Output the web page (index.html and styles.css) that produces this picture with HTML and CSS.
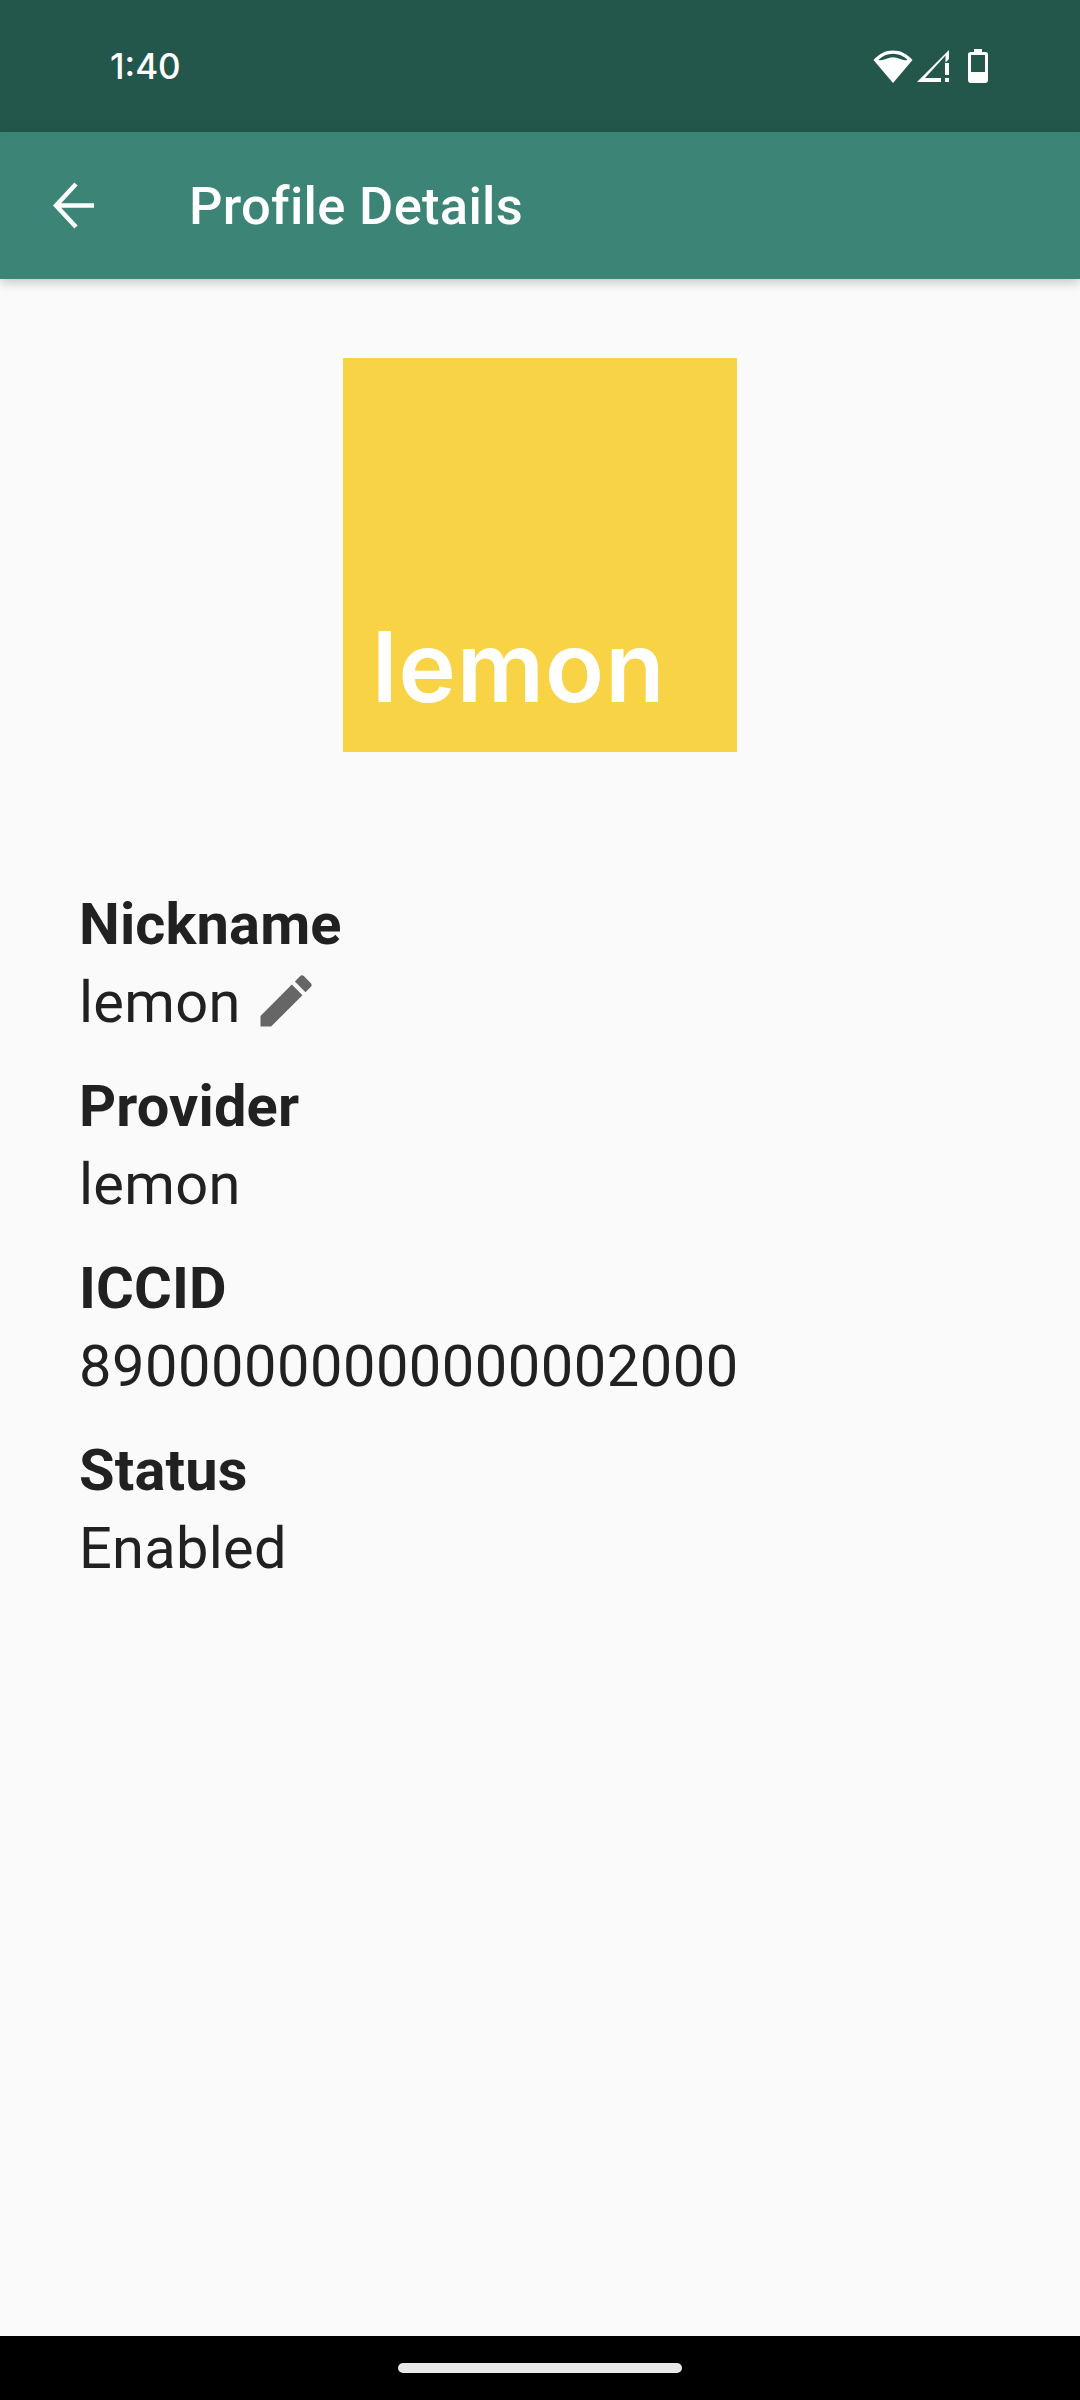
FILE: index.html
```html
<!DOCTYPE html>
<html lang="en">
<head>
<meta charset="utf-8">
<title>Profile Details</title>
<link rel="stylesheet" href="styles.css">
</head>
<body>
<div class="screen">
  <header class="status-bar">
    <span class="clock">1:40</span>
    <div class="status-icons">
      <svg class="ic-wifi" width="40" height="33" viewBox="0 0 40 33"><path fill="#fff" fill-rule="evenodd" d="M20 33 .5 10C6 3.800 12.500.5 20 .5S34 3.800 39.500 10L20 33ZM5.500 9.800C9.300 11.800 14.500 7.300 20 7.300s10.700 4.500 14.500 2.500C30.500 5.800 25.500 3.800 20 3.800S9.500 5.800 5.500 9.800Z"/></svg>
      <svg class="ic-signal" width="32" height="32" viewBox="0 0 32 32"><path fill="#fff" fill-rule="evenodd" d="M0 32 32 0v9l-3.500 3.500V5.500L8 28h16v4H0Z"/><path fill="#fff" d="M28 13h4v12h-4zM28 28h4v4h-4z"/></svg>
      <svg class="ic-battery" width="20" height="34" viewBox="0 0 20 34"><path fill="#fff" fill-rule="evenodd" d="M6 0h8v3h3.500Q20 3 20 5.500V31q0 3-3 3H3q-3 0-3-3V5.500Q0 3 2.500 3H6V0ZM3 6v17h14V6H3Z"/></svg>
    </div>
  </header>
  <div class="app-bar">
    <svg class="ic-back" width="41" height="47" viewBox="0 0 41 47"><path fill="none" stroke="#fff" stroke-width="4.500" d="M23 2 3 23.500 23 45M3 23.500h38"/></svg>
    <h1 class="title">Profile Details</h1>
  </div>
  <main class="content">
    <div class="logo-row">
      <div class="logo"><span class="logo-text">lemon</span></div>
    </div>
    <dl class="details">
      <dt class="label">Nickname</dt>
      <dd class="value">lemon
        <svg class="ic-edit" width="68" height="68" viewBox="0 0 24 24"><path fill="#666" d="M3 17.250V21h3.750L17.810 9.940l-3.750-3.750L3 17.250zM20.710 7.040a1 1 0 0 0 0-1.410l-2.340-2.340a1 1 0 0 0-1.410 0l-1.830 1.830 3.750 3.750 1.830-1.830z"/></svg>
      </dd>
      <dt class="label">Provider</dt>
      <dd class="value">lemon</dd>
      <dt class="label">ICCID</dt>
      <dd class="value value-digits">89000000000000002000</dd>
      <dt class="label">Status</dt>
      <dd class="value">Enabled</dd>
    </dl>
  </main>
  <footer class="nav-bar"><div class="home-pill"></div></footer>
</div>
</body>
</html>
```
FILE: styles.css
```css
* { box-sizing: border-box; }
html, body { margin: 0; padding: 0; }
body { font-family: Roboto, "Noto Sans", sans-serif; background: #fafafa; color: #212121; }
.screen { width: 1080px; height: 2400px; display: flex; flex-direction: column; overflow: hidden; }
.status-bar { height: 132px; flex: none; background: #23574c; color: #fff; display: flex; align-items: center; justify-content: space-between; padding: 0 92px 0 110px; }
.clock { font-family: Inter, Roboto, sans-serif; font-size: 35px; font-weight: 500; }
.status-icons { display: flex; align-items: center; gap: 4px; }
.ic-battery { margin-left: 15px; }
.app-bar { height: 147px; flex: none; background: #3c8475; display: flex; align-items: center; padding-left: 53px; box-shadow: 0 4px 10px rgba(0,0,0,.2); position: relative; z-index: 1; }
.title { margin: 0 0 0 95px; font-size: 52.5px; font-weight: 500; color: #fff; letter-spacing: .3px; }
.content { flex: 1; padding: 79px 79px 0; }
.logo-row { display: flex; justify-content: center; }
.logo { width: 394px; height: 394px; background: #f7d345; display: flex; align-items: flex-end; padding: 0 0 37px 29px; }
.logo-text { font-family: Inter, Roboto, sans-serif; font-size: 97px; font-weight: 600; color: #fff; line-height: 1; letter-spacing: 1px; filter: blur(.6px); }
.details { margin: 133px 0 0; }
.label { font-size: 57.75px; font-weight: 700; line-height: 78px; letter-spacing: .15px; }
.value { margin: 0 0 26px; font-size: 57.75px; line-height: 78px; letter-spacing: .3px; display: flex; align-items: center; gap: 11px; }
.value-digits { letter-spacing: .53px; }
.ic-edit { margin-bottom: 3px; }
.nav-bar { height: 64px; flex: none; background: #000; display: flex; justify-content: center; padding-top: 27px; }
.home-pill { width: 284px; height: 10px; border-radius: 5px; background: #e8e8e8; }
```
